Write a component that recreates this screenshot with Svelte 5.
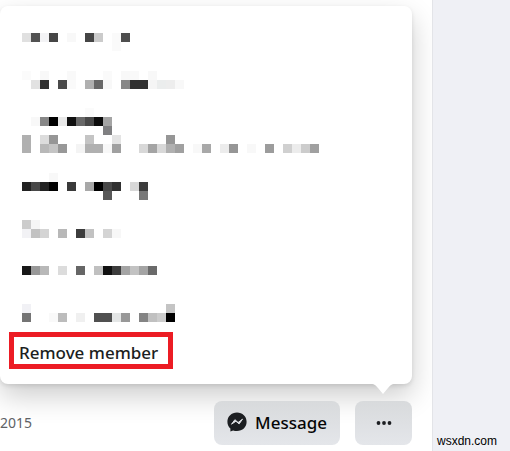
<script>
  // Each private menu entry is a mosaic: rows of [column, colour] cells.
  const cell = 9;
  const entries = [
    { cols: 12, gap: 20, rows: [
      [],
      [[0,'#e0e0e0'],[1,'#525252'],[2,'#f3f3f5'],[3,'#464646'],[5,'#f8f8f8'],[7,'#454545'],[8,'#cbcbcb'],[10,'#fafafa'],[11,'#4e4e4e']],
      [[10,'#fafafa']]
    ] },
    { cols: 18, gap: 10, rows: [
      [[0,'#fbfbfb'],[2,'#f8f8f8'],[5,'#f9f9f9'],[9,'#fafafa'],[11,'#f8f8f8'],[12,'#f9f9f9'],[14,'#f8f8f8']],
      [[1,'#e2e2e2'],[2,'#303030'],[4,'#4a4a4a'],[5,'#fafafa'],[7,'#b0b0b0'],[8,'#686868'],[9,'#f8f8f8'],[11,'#878787'],[12,'#303030'],[13,'#303030'],[14,'#f5f5f5'],[15,'#ebeded'],[16,'#ededed'],[17,'#f8f8f8']],
      []
    ] },
    { cols: 33, gap: 20, rows: [
      [[7,'#fbfbfb']],
      [[1,'#f8f8f8'],[2,'#878787'],[3,'#000'],[4,'#e8e8e8'],[5,'#101010'],[6,'#686868'],[7,'#484848'],[8,'#0c0c0c'],[9,'#a4a4a4']],
      [[9,'#808082']],
      [[0,'#b0b0b0'],[2,'#dcdcdc'],[3,'#969696'],[7,'#c4c4c4'],[10,'#e4e4e4'],[16,'#969696']],
      [[0,'#b0b0b0'],[2,'#b8b8b8'],[3,'#c4c4c4'],[4,'#989898'],[6,'#f4f4f4'],[7,'#b0b0b0'],[8,'#b0b0b0'],[9,'#f8f8f8'],[10,'#a0a0a0'],[13,'#d8d8d8'],[14,'#a4a4a4'],[15,'#d8d8d8'],[16,'#b0b0b0'],[17,'#a0a0a0'],[19,'#f8f8f8'],[20,'#a8a8a8'],[22,'#ececec'],[23,'#969696'],[25,'#f8f8f8'],[27,'#9c9c9c'],[29,'#d0d0d0'],[30,'#ececec'],[31,'#cccccc'],[32,'#a0a0a0']]
    ] },
    { cols: 14, gap: 20, rows: [
      [[3,'#f8f8f8']],
      [[0,'#222'],[1,'#484848'],[2,'#222'],[3,'#000'],[5,'#3a3a3a'],[7,'#a8a8a8'],[8,'#000'],[9,'#484848'],[10,'#303030'],[12,'#d8d8d8'],[13,'#3c3c3c']],
      [[9,'#585858'],[13,'#787878']]
    ] },
    { cols: 11, gap: 10, rows: [
      [[0,'#cccccc'],[1,'#f6f6f6']],
      [[0,'#f2f2f5'],[1,'#c2c2c2'],[2,'#d4d4d4'],[4,'#b8b8b8'],[6,'#3c3c3c'],[7,'#c2c2c2'],[9,'#d4d4d4'],[10,'#f7f7f7']],
      []
    ] },
    { cols: 15, gap: 20, rows: [
      [],
      [[0,'#181818'],[1,'#989898'],[2,'#b8b8b8'],[4,'#dcdcdc'],[6,'#666'],[8,'#c0c0c0'],[9,'#101010'],[10,'#3c3c3c'],[11,'#a4a4a4'],[12,'#c2c2c2'],[13,'#a4a4a4'],[14,'#6a6a6a']],
      []
    ] },
    { cols: 17, gap: 1, rows: [
      [[0,'#f1f1f5'],[16,'#c4c4c4']],
      [[0,'#747474'],[3,'#f9f9f9'],[4,'#bcbcbc'],[6,'#f0f0f0'],[8,'#505050'],[9,'#505050'],[10,'#e4e6e6'],[11,'#989898'],[13,'#848484'],[14,'#c0c0c0'],[15,'#cccccc'],[16,'#000']],
      []
    ] }
  ];
</script>

<div class="page">
  <main>
    <div class="menu" role="menu">
      {#each entries as entry}
        <button class="entry" role="menuitem" aria-label="Hidden option" style="margin-bottom: {entry.gap}px">
          <svg width={entry.cols * cell} height={entry.rows.length * cell} shape-rendering="crispEdges" aria-hidden="true">
            {#each entry.rows as row, y}
              {#each row as [x, fill]}
                <rect x={x * cell} y={y * cell} width={cell} height={cell} {fill} />
              {/each}
            {/each}
          </svg>
        </button>
      {/each}
      <button class="remove" role="menuitem">Remove member</button>
      <svg class="arrow" width="24" height="12" viewBox="0 0 24 12" aria-hidden="true">
        <path d="M0 0H24C20 0 19 2 17 4L12 10L7 4C5 2 4 0 0 0Z" fill="#fff" />
      </svg>
    </div>

    <div class="footer">
      <span class="year">2015</span>
      <button class="action message">
        <svg width="20" height="20" viewBox="0 0 20 20" aria-hidden="true">
          <path d="M10 .4C4.500.400.400 4.400.400 9.700C.400 12.500 1.500 14.900 3.400 16.600V19.600L6.100 18.400C7.300 18.800 8.600 19 10 19C15.500 19 19.600 15 19.600 9.700S15.500.400 10 .400Z" fill="#1c1e21" />
          <path d="M4.500 12.200L7.900 7.700L11.100 10.500L15.500 7.200L12.100 11.900L8.900 9.200Z" fill="#e0e2e5" stroke="#e0e2e5" stroke-width="1" stroke-linejoin="round" />
        </svg>
        Message
      </button>
      <button class="action more" aria-label="More options">
        <svg width="16" height="4" viewBox="0 0 16 4" aria-hidden="true">
          <circle cx="2.500" cy="2" r="1.900" fill="#1c1e21" />
          <circle cx="8" cy="2" r="1.900" fill="#1c1e21" />
          <circle cx="13.500" cy="2" r="1.900" fill="#1c1e21" />
        </svg>
      </button>
    </div>
  </main>
  <aside>wsxdn.com</aside>
</div>

<style>
  :global(body) {
    margin: 0;
  }
  .page {
    display: flex;
    min-height: 100vh;
    background: #fff;
    font-family: "Noto Sans", "Open Sans", sans-serif;
    color: #1c1e21;
    overflow: hidden;
  }
  button {
    font: inherit;
    color: inherit;
    border: 0;
    padding: 0;
    background: none;
    cursor: pointer;
  }
  main {
    flex: 1;
    min-width: 0;
    box-sizing: border-box;
    padding: 6px 20px 6px 0;
    overflow: hidden;
  }
  .menu {
    position: relative;
    display: flex;
    flex-direction: column;
    align-items: flex-start;
    padding: 18px 9px 15px;
    background: #fff;
    border-radius: 8px;
    box-shadow: 0 12px 28px rgba(0, 0, 0, 0.2), 0 2px 4px rgba(0, 0, 0, 0.1);
  }
  .entry {
    display: block;
    margin-left: 13px;
  }
  .entry svg {
    display: block;
  }
  .remove {
    box-sizing: border-box;
    width: 164px;
    height: 37px;
    border: 5px solid #ec1c24;
    padding: 4px 0 0 5px;
    font-size: 17px;
    font-weight: 500;
    line-height: 24px;
    text-align: left;
    white-space: nowrap;
  }
  .arrow {
    position: absolute;
    right: 17px;
    top: 100%;
  }
  .footer {
    display: flex;
    align-items: center;
    margin-top: 17px;
  }
  .year {
    display: flex;
    justify-content: flex-end;
    min-width: 30px;
    margin-right: auto;
    font-size: 14px;
    line-height: 20px;
    color: #606266;
  }
  .action {
    display: flex;
    align-items: center;
    justify-content: center;
    gap: 8px;
    height: 44px;
    border-radius: 8px;
    background: linear-gradient(#d8dadc, #e4e6ea);
    position: relative;
  }
  .message {
    width: 126px;
    box-sizing: border-box;
    padding-bottom: 2px;
    font-size: 17px;
    font-weight: 500;
    color: #050505;
  }
  .more {
    width: 57px;
    margin-left: 15px;
  }
  aside {
    display: flex;
    align-items: flex-end;
    box-sizing: border-box;
    width: 78px;
    padding: 0 0 2px 4px;
    border-left: 1px solid #e3e4e8;
    background: #eff0f5;
    font: 12px/16px "Liberation Sans", Arial, sans-serif;
    color: #000;
  }
</style>
